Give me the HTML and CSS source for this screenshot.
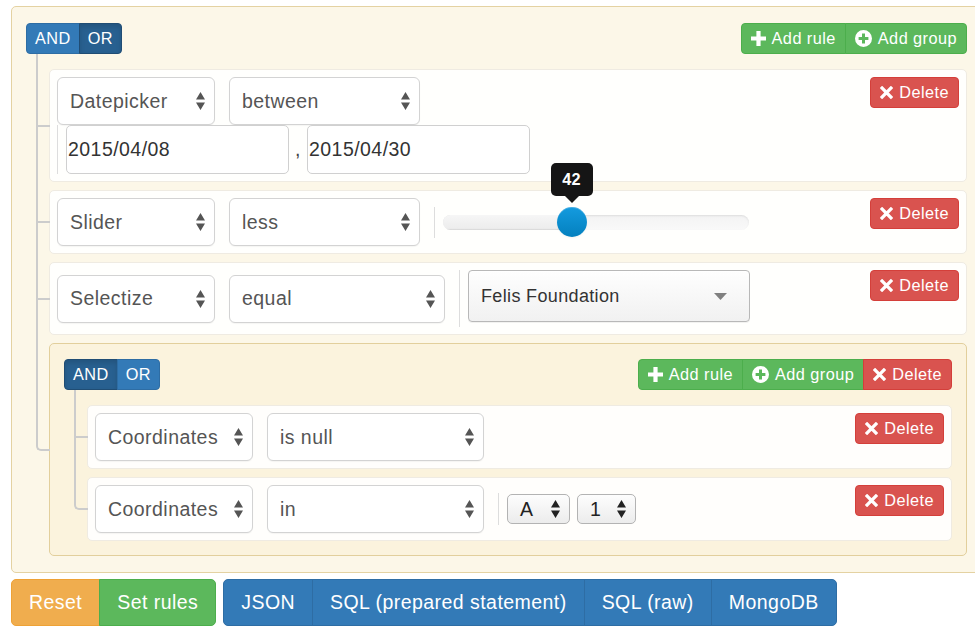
FILE: index.html
```html
<!DOCTYPE html>
<html lang="en">
<head>
<meta charset="utf-8">
<title>Query Builder</title>
<link rel="stylesheet" href="styles.css">
</head>
<body>
<div class="qb">
  <div class="group">
    <div class="group-header">
      <div class="btn-group">
        <button class="btn btn-xs btn-primary">AND</button>
        <button class="btn btn-xs btn-primary active">OR</button>
      </div>
      <div class="btn-group">
        <button class="btn btn-xs btn-success"><svg class="ico" viewBox="0 0 15 15"><path d="M5.4 0h4.2v5.4H15v4.2H9.6V15H5.4V9.6H0V5.4h5.4z"/></svg>Add rule</button>
        <button class="btn btn-xs btn-success"><svg class="ico ico-circle" viewBox="0 0 17 17"><path fill-rule="evenodd" d="M8.5 0a8.5 8.5 0 1 0 0 17a8.5 8.5 0 1 0 0-17zM7 3.6h3v3.4h3.4v3H10v3.4H7V10H3.6V7H7z"/></svg>Add group</button>
      </div>
    </div>

    <div class="rules-list">
      <!-- date range rule -->
      <div class="rule">
        <div class="rule-body">
          <div class="select w-filter"><span>Datepicker</span><svg class="arrows" viewBox="0 0 9 18"><path d="M0 7.5L4.5 0L9 7.5zM0 10.5h9L4.5 18z"/></svg></div>
          <div class="select w-between"><span>between</span><svg class="arrows" viewBox="0 0 9 18"><path d="M0 7.5L4.5 0L9 7.5zM0 10.5h9L4.5 18z"/></svg></div>
          <div class="value">
            <input class="input" type="text" value="2015/04/08">
            <span class="comma">,</span>
            <input class="input" type="text" value="2015/04/30">
          </div>
        </div>
        <button class="btn btn-xs btn-danger del"><svg class="ico ico-x" viewBox="0 0 14 14"><path d="M1 1L13 13M13 1L1 13"/></svg>Delete</button>
      </div>

      <!-- slider rule -->
      <div class="rule">
        <div class="rule-body">
          <div class="select w-filter"><span>Slider</span><svg class="arrows" viewBox="0 0 9 18"><path d="M0 7.5L4.5 0L9 7.5zM0 10.5h9L4.5 18z"/></svg></div>
          <div class="select w-between"><span>less</span><svg class="arrows" viewBox="0 0 9 18"><path d="M0 7.5L4.5 0L9 7.5zM0 10.5h9L4.5 18z"/></svg></div>
          <div class="value value-slider">
            <div class="slider">
              <div class="track"><div class="selection" style="width:42%"></div></div>
              <div class="tip" style="left:42%">42</div>
              <div class="handle" style="left:42%"></div>
            </div>
          </div>
        </div>
        <button class="btn btn-xs btn-danger del"><svg class="ico ico-x" viewBox="0 0 14 14"><path d="M1 1L13 13M13 1L1 13"/></svg>Delete</button>
      </div>

      <!-- selectize rule -->
      <div class="rule">
        <div class="rule-body">
          <div class="select w-filter"><span>Selectize</span><svg class="arrows" viewBox="0 0 9 18"><path d="M0 7.5L4.5 0L9 7.5zM0 10.5h9L4.5 18z"/></svg></div>
          <div class="select w-equal"><span>equal</span><svg class="arrows" viewBox="0 0 9 18"><path d="M0 7.5L4.5 0L9 7.5zM0 10.5h9L4.5 18z"/></svg></div>
          <div class="value value-selectize">
            <div class="selectize"><span>Felis Foundation</span><svg class="caret" viewBox="0 0 13 7"><path d="M0 0h13L6.5 7z"/></svg></div>
          </div>
        </div>
        <button class="btn btn-xs btn-danger del"><svg class="ico ico-x" viewBox="0 0 14 14"><path d="M1 1L13 13M13 1L1 13"/></svg>Delete</button>
      </div>

      <!-- nested group -->
      <div class="group">
        <div class="group-header">
          <div class="btn-group">
            <button class="btn btn-xs btn-primary active">AND</button>
            <button class="btn btn-xs btn-primary">OR</button>
          </div>
          <div class="btn-group">
            <button class="btn btn-xs btn-success"><svg class="ico" viewBox="0 0 15 15"><path d="M5.4 0h4.2v5.4H15v4.2H9.6V15H5.4V9.6H0V5.4h5.4z"/></svg>Add rule</button>
            <button class="btn btn-xs btn-success"><svg class="ico ico-circle" viewBox="0 0 17 17"><path fill-rule="evenodd" d="M8.5 0a8.5 8.5 0 1 0 0 17a8.5 8.5 0 1 0 0-17zM7 3.6h3v3.4h3.4v3H10v3.4H7V10H3.6V7H7z"/></svg>Add group</button>
            <button class="btn btn-xs btn-danger"><svg class="ico ico-x" viewBox="0 0 14 14"><path d="M1 1L13 13M13 1L1 13"/></svg>Delete</button>
          </div>
        </div>

        <div class="rules-list">
          <div class="rule">
            <div class="rule-body">
              <div class="select w-filter"><span>Coordinates</span><svg class="arrows" viewBox="0 0 9 18"><path d="M0 7.5L4.5 0L9 7.5zM0 10.5h9L4.5 18z"/></svg></div>
              <div class="select w-isnull"><span>is null</span><svg class="arrows" viewBox="0 0 9 18"><path d="M0 7.5L4.5 0L9 7.5zM0 10.5h9L4.5 18z"/></svg></div>
            </div>
            <button class="btn btn-xs btn-danger del"><svg class="ico ico-x" viewBox="0 0 14 14"><path d="M1 1L13 13M13 1L1 13"/></svg>Delete</button>
          </div>

          <div class="rule">
            <div class="rule-body">
              <div class="select w-filter"><span>Coordinates</span><svg class="arrows" viewBox="0 0 9 18"><path d="M0 7.5L4.5 0L9 7.5zM0 10.5h9L4.5 18z"/></svg></div>
              <div class="select w-isnull"><span>in</span><svg class="arrows" viewBox="0 0 9 18"><path d="M0 7.5L4.5 0L9 7.5zM0 10.5h9L4.5 18z"/></svg></div>
              <div class="value value-small">
                <div class="mini w-a"><span>A</span><svg class="arrows" viewBox="0 0 9 18"><path d="M0 7.5L4.5 0L9 7.5zM0 10.5h9L4.5 18z"/></svg></div>
                <div class="mini w-1"><span>1</span><svg class="arrows" viewBox="0 0 9 18"><path d="M0 7.5L4.5 0L9 7.5zM0 10.5h9L4.5 18z"/></svg></div>
              </div>
            </div>
            <button class="btn btn-xs btn-danger del"><svg class="ico ico-x" viewBox="0 0 14 14"><path d="M1 1L13 13M13 1L1 13"/></svg>Delete</button>
          </div>
        </div>
      </div>
    </div>
  </div>

  <div class="actions">
    <div class="btn-group">
      <button class="btn btn-md btn-warning">Reset</button>
      <button class="btn btn-md btn-success">Set rules</button>
    </div>
    <div class="btn-group">
      <button class="btn btn-md btn-primary">JSON</button>
      <button class="btn btn-md btn-primary">SQL (prepared statement)</button>
      <button class="btn btn-md btn-primary">SQL (raw)</button>
      <button class="btn btn-md btn-primary">MongoDB</button>
    </div>
  </div>
</div>
</body>
</html>
```

FILE: styles.css
```css
html, body {
  margin: 0;
  padding: 0;
  overflow: hidden;
}

body {
  width: 975px;
  height: 626px;
  background: #fff;
  font-family: "Liberation Sans", Arial, sans-serif;
  font-size: 19.5px;
  letter-spacing: .45px;
  color: #333;
}

.qb {
  width: 971px;
  margin: 6px 0 0 11px;
}

/* ---------- groups ---------- */
.group {
  position: relative;
  border: 1px solid #e4d2a2;
  border-radius: 5px;
  background: rgba(250, 240, 210, .5);
  padding: 16px 14px 16px 14px;
}

.group .group {
  border-color: #e2cf9c;
  padding-top: 15px;
  padding-bottom: 14px;
}

.group-header {
  display: flex;
  justify-content: space-between;
  align-items: flex-start;
}

.rules-list {
  margin-top: 15.5px;
  padding-left: 23px;
  display: flex;
  flex-direction: column;
  gap: 8px;
}

/* tree connectors */
.rules-list > * {
  position: relative;
}

.rules-list > *::before,
.rules-list > *::after {
  content: '';
  position: absolute;
  left: -14px;
  width: 12px;
  border-color: #ccc;
  border-style: solid;
}

.rules-list > *::before {
  top: -6px;
  height: calc(50% + 5px);
  border-width: 0 0 2px 2px;
}

.rules-list > *::after {
  top: 50%;
  height: calc(50% + 6px);
  border-width: 0 0 0 2px;
}

.rules-list > *:first-child::before {
  top: -16px;
  height: calc(50% + 15px);
}

.rules-list > *:last-child::before {
  border-radius: 0 0 0 5px;
}

.rules-list > *:last-child::after {
  display: none;
}

/* ---------- rules ---------- */
.rule {
  display: flex;
  align-items: flex-start;
  background: rgba(255, 255, 255, .9);
  border: 1px solid #efebe2;
  border-radius: 5px;
  padding: 7px;
}

.rule-body {
  flex: 1;
  display: flex;
  flex-wrap: wrap;
  align-items: center;
  column-gap: 14px;
}

.del {
  margin-left: 10px;
  height: 31px;
}

/* select boxes */
.select {
  box-sizing: border-box;
  height: 48px;
  display: flex;
  align-items: center;
  justify-content: space-between;
  padding: 0 9px 0 12px;
  border: 1px solid #d3d3d3;
  border-radius: 6px;
  background: #fff;
  color: #555;
  box-shadow: 0 1px 1px rgba(0, 0, 0, .04);
}

.w-filter { width: 158px; }
.w-between { width: 191px; }
.w-equal { width: 216px; }
.w-isnull { width: 217px; }

.arrows {
  width: 9px;
  height: 18px;
  fill: #555;
  flex-shrink: 0;
}

/* value containers */
.value {
  display: flex;
  align-items: center;
  border-left: 1px solid #ddd;
  padding-left: 8px;
}

.input {
  box-sizing: border-box;
  width: 223px;
  height: 49px;
  margin: 0;
  padding: 0 1px;
  border: 1px solid #d0d0d0;
  border-radius: 5px;
  background: #fff;
  font: inherit;
  letter-spacing: inherit;
  color: #333;
  outline: none;
}

.comma {
  width: 18px;
  text-align: center;
  color: #444;
}

/* slider */
.value-slider {
  height: 31px;
}

.slider {
  position: relative;
  width: 306px;
  height: 31px;
  display: flex;
  align-items: center;
}

.track {
  width: 100%;
  height: 15px;
  border-radius: 8px;
  background: linear-gradient(#f3f3f3, #f9f9f9);
  box-shadow: inset 0 1px 2px rgba(0, 0, 0, .09);
  overflow: hidden;
}

.selection {
  height: 100%;
  background: linear-gradient(#f6f6f6, #ececec);
  box-shadow: inset 0 -1px 1px rgba(0, 0, 0, .08);
}

.handle {
  position: absolute;
  top: 50%;
  width: 30px;
  height: 30px;
  margin: -15px 0 0 -15px;
  border-radius: 50%;
  background: linear-gradient(#149bdf, #0480be);
  box-shadow: inset 0 1px 0 rgba(255, 255, 255, .2), 0 1px 2px rgba(0, 0, 0, .05);
}

.tip {
  position: absolute;
  top: -44px;
  width: 42px;
  height: 33px;
  margin-left: -21px;
  border-radius: 5px;
  background: #151515;
  color: #fff;
  font-size: 16.3px;
  font-weight: bold;
  letter-spacing: .3px;
  line-height: 33px;
  text-align: center;
}

.tip::after {
  content: '';
  position: absolute;
  left: 50%;
  top: 33px;
  margin-left: -7px;
  border-style: solid;
  border-width: 7px 7px 0 7px;
  border-color: #151515 transparent transparent transparent;
}

/* selectize */
.value-selectize {
  height: 57px;
  align-items: flex-start;
}

.selectize {
  box-sizing: border-box;
  width: 282px;
  height: 52px;
  display: flex;
  align-items: center;
  justify-content: space-between;
  padding: 0 22px 0 12px;
  border: 1px solid #b8b8b8;
  border-radius: 4px;
  background: linear-gradient(#fefefe, #f1f1f1);
  box-shadow: 0 1px 0 rgba(0, 0, 0, .05), inset 0 1px 0 rgba(255, 255, 255, .8);
  font-size: 18px;
  letter-spacing: .35px;
  color: #333;
}

.caret {
  width: 13px;
  height: 7px;
  fill: #808080;
}

/* small native-looking selects */
.value-small {
  height: 32px;
  gap: 7px;
}

.mini {
  box-sizing: border-box;
  height: 30px;
  display: flex;
  align-items: center;
  justify-content: space-between;
  padding: 0 9px 0 12px;
  border: 1px solid #b3b3b3;
  border-radius: 5px;
  background: linear-gradient(#fdfdfd, #ececec);
  color: #222;
}

.mini .arrows {
  fill: #222;
}

.w-a { width: 63px; }
.w-1 { width: 59px; }

/* ---------- buttons ---------- */
.btn-group {
  display: flex;
}

.btn {
  box-sizing: border-box;
  display: inline-flex;
  align-items: center;
  margin: 0;
  border: 1px solid transparent;
  font: inherit;
  letter-spacing: inherit;
  color: #fff;
  white-space: nowrap;
  cursor: pointer;
}

.btn-xs {
  height: 30.5px;
  padding: 0 9px;
  border-radius: 4px;
  font-size: 16.3px;
}

.btn-md {
  height: 47px;
  padding: 0 17px;
  border-radius: 5px;
}

.btn-group > .btn:not(:first-child) {
  border-top-left-radius: 0;
  border-bottom-left-radius: 0;
  margin-left: -1px;
}

.btn-group > .btn:not(:last-child) {
  border-top-right-radius: 0;
  border-bottom-right-radius: 0;
}

.btn-primary { background: #337ab7; border-color: #2e6da4; }
.btn-primary.active {
  background: #286090;
  border-color: #204d74;
  box-shadow: inset 0 3px 5px rgba(0, 0, 0, .125);
}
.btn-success { background: #5cb85c; border-color: #4cae4c; }
.btn-danger { background: #d9534f; border-color: #d43f3a; }
.btn-warning { background: #f0ad4e; border-color: #eea236; }

.group-header .btn-primary { padding: 0 8px; }

.ico {
  width: 15px;
  height: 15px;
  margin-right: 6px;
  fill: #fff;
  flex-shrink: 0;
}

.ico-circle {
  width: 17px;
  height: 17px;
}

.ico-x {
  width: 13px;
  height: 13px;
  fill: none;
  stroke: #fff;
  stroke-width: 3.6;
}

/* ---------- footer actions ---------- */
.actions {
  display: flex;
  gap: 7px;
  margin-top: 6px;
}
```
